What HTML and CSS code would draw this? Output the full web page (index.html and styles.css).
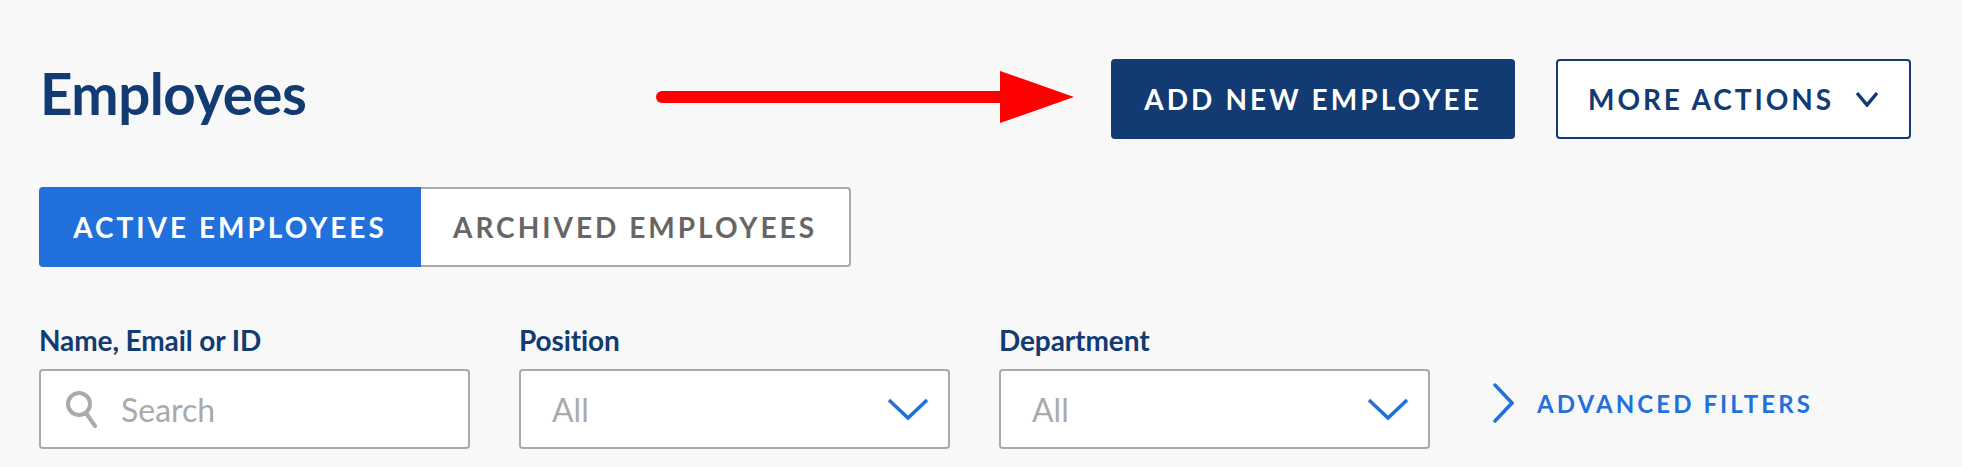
FILE: index.html

```html
<!DOCTYPE html>
<html lang="en">
<head>
  <meta charset="UTF-8" />
  <title>Employees</title>
  <link rel="stylesheet" href="styles.css">
</head>
<body>
  <div class="container">
    <div class="page-header">
      <h1>Employees</h1>
      <div class="actions">
        <button class="btn btn-primary" type="button">Add New Employee</button>
        <button class="btn btn-outline" type="button">More Actions
          <svg class="more-caret" width="24" height="16" viewBox="0 0 24 16"><path d="M2 2l10 12L22 2" fill="none" stroke="#123a73" stroke-width="3.5"/></svg>
        </button>
      </div>
    </div>

    <div class="tabs">
      <button class="tab tab-active" type="button">Active Employees</button>
      <button class="tab" type="button">Archived Employees</button>
    </div>

    <form class="filters">
      <div class="form-group">
        <label for="search">Name, Email or ID</label>
        <div class="field">
          <svg class="search-icon" width="32" height="38" viewBox="0 0 32 38"><circle cx="13" cy="14" r="11" fill="none" stroke="#aaa" stroke-width="4"/><path d="M20 23l9 13" fill="none" stroke="#aaa" stroke-width="4" stroke-linecap="round"/></svg>
          <span class="placeholder" id="search">Search</span>
        </div>
      </div>
      <div class="form-group">
        <label>Position</label>
        <div class="field field-select">
          <span class="placeholder">All</span>
          <svg width="42" height="24" viewBox="0 0 42 24"><path d="M2 3l19 18L40 3" fill="none" stroke="#2270dc" stroke-width="3.5"/></svg>
        </div>
      </div>
      <div class="form-group">
        <label>Department</label>
        <div class="field field-select">
          <span class="placeholder">All</span>
          <svg width="42" height="24" viewBox="0 0 42 24"><path d="M2 3l19 18L40 3" fill="none" stroke="#2270dc" stroke-width="3.5"/></svg>
        </div>
      </div>
      <a class="advanced" href="#">
        <svg width="21" height="40" viewBox="0 0 21 40"><path d="M2 2l17 18L2 38" fill="none" stroke="#2270dc" stroke-width="3.5" stroke-linecap="round"/></svg>
        Advanced Filters
      </a>
    </form>
  </div>

  <!-- red arrow drawn over the screenshot -->
  <svg class="annotation" width="420" height="54" viewBox="0 0 420 54">
    <path d="M6 26h350" fill="none" stroke="#fe0000" stroke-width="12" stroke-linecap="round"/>
    <path d="M344 0l74 26-74 26z" fill="#fe0000"/>
  </svg>
</body>
</html>
```

FILE: styles.css

```css
* {
  box-sizing: border-box;
  font-family: 'Lato', 'Noto Sans', sans-serif;
}
body {
  margin: 0;
  background: #f8f8f8;
  height: 467px;
  overflow: hidden;
  position: relative;
}
.container {
  padding: 59px 51px 0 39px;
}
.page-header {
  display: flex;
  justify-content: space-between;
  align-items: center;
  height: 80px;
}
h1 {
  margin: 0 0 12px 1px;
  color: #123a73;
  font-size: 56.5px;
  font-weight: 700;
  letter-spacing: -0.5px;
}
.actions {
  display: flex;
  gap: 41px;
}
.btn {
  height: 80px;
  border-radius: 4px;
  font-size: 28px;
  font-weight: 700;
  letter-spacing: 3.1px;
  text-transform: uppercase;
  cursor: pointer;
}
.btn-primary {
  width: 404px;
  background: #123a73;
  border: none;
  color: #fff;
}
.btn-outline {
  width: 355px;
  background: #fff;
  border: 2px solid #123a73;
  color: #123a73;
  display: flex;
  align-items: center;
  justify-content: center;
  gap: 21px;
  letter-spacing: 2.9px;
}
.tabs {
  display: flex;
  margin-top: 48px;
  width: 812px;
}
.tab {
  height: 80px;
  width: 430px;
  background: #fff;
  border: 2px solid #aaa;
  border-left: none;
  border-radius: 0 4px 4px 0;
  color: #666;
  font-size: 28px;
  font-weight: 700;
  letter-spacing: 3px;
  text-transform: uppercase;
  cursor: pointer;
}
.tab-active {
  width: 382px;
  background: #2270dc;
  border: none;
  border-radius: 4px 0 0 4px;
  color: #fff;
}
.filters {
  display: flex;
  gap: 49px;
  margin-top: 56px;
}
.form-group {
  width: 431px;
}
label {
  display: block;
  height: 46px;
  color: #123a73;
  font-size: 28px;
  font-weight: 700;
  line-height: 34px;
  letter-spacing: -0.1px;
}
.field {
  display: flex;
  align-items: center;
  height: 80px;
  padding: 0 19px 0 25px;
  gap: 23px;
  background: #fff;
  border: 2px solid #aaa;
  border-radius: 4px;
}
.field-select {
  justify-content: space-between;
  padding-left: 31px;
}
.placeholder {
  color: #aaa;
  font-size: 32px;
}
.search-icon {
  flex-shrink: 0;
}
.advanced {
  display: flex;
  align-items: center;
  align-self: flex-end;
  gap: 23px;
  height: 60px;
  margin: 0 0 16px 14px;
  color: #2270dc;
  font-size: 24px;
  font-weight: 700;
  letter-spacing: 3.1px;
  text-decoration: none;
  text-transform: uppercase;
  white-space: nowrap;
}
.annotation {
  position: absolute;
  left: 656px;
  top: 71px;
}
```
